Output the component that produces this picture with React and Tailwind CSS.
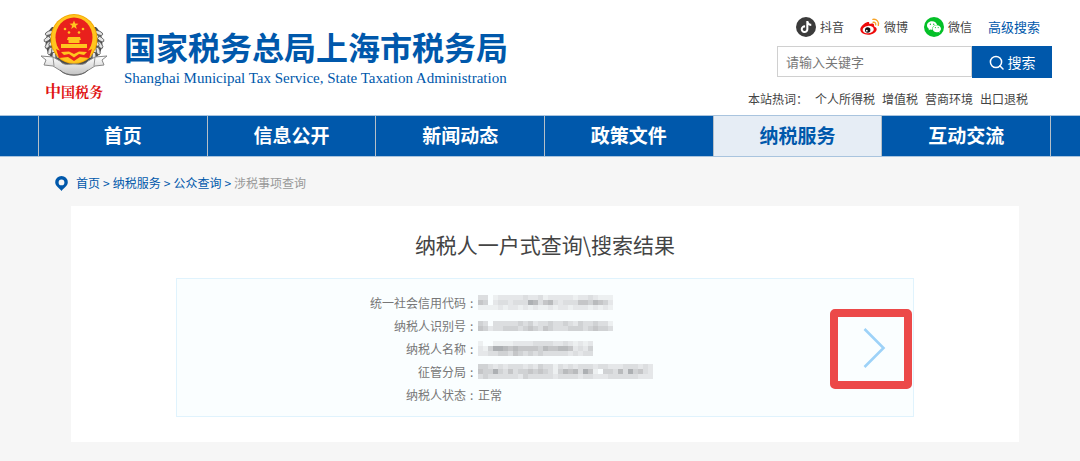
import React from 'react';
import { FaTiktok } from 'react-icons/fa6';
import { AiFillWechat } from 'react-icons/ai';

const NAV = ['首页', '信息公开', '新闻动态', '政策文件', '纳税服务', '互动交流'];
const HOT_WORDS = ['个人所得税', '增值税', '营商环境', '出口退税'];

// Each digit is the darkness of one mosaic cell, 0 is clear.
const ROWS = [
  { label: '统一社会信用代码', mosaic: ['330122222322312222212232111', '540233233376356323335546542', '111121221212112122122212121'] },
  { label: '纳税人识别号', mosaic: ['430333334342334334324334331', '542334443454354333444345443'] },
  { label: '纳税人名称', mosaic: ['10011112222333322321212', '21477656555546556652324', '22334435434343333323233'] },
  { label: '征管分局', mosaic: ['44323233323243313232333233222333232', '54474353445454314656375104436374532', '34333333243333323333233222333333222'] },
  { label: '纳税人状态', value: '正常' },
];

const SHADES = ['#fafeff', '#edf0f1', '#e5e7e9', '#dcdee0', '#d0d2d4', '#c5c6c8', '#b9bbbd', '#adb0b3'];

function Mosaic({ rows }) {
  const w = rows[0].length * 5;
  const h = rows.length * 5;
  return (
    <svg width={w} height={h} viewBox={`0 0 ${w} ${h}`} shapeRendering="crispEdges" aria-hidden="true">
      {rows.map((row, y) =>
        [...row].map((d, x) => (
          <rect key={`${x}-${y}`} x={x * 5} y={y * 5} width="5" height="5" fill={SHADES[Number(d)]} />
        ))
      )}
    </svg>
  );
}

function Emblem() {
  const side = [
    [9, 20, -70], [7.5, 26, -82], [8, 32, -100], [10, 38, -118], [14, 43, -135],
    [13, 23, -60], [12, 30, -90], [14, 36, -115], [18, 41, -130],
  ];
  return (
    <svg width="68" height="66" viewBox="0 0 68 66" aria-hidden="true">
      <defs>
        <linearGradient id="ribbon" x1="0" y1="0" x2="0" y2="1">
          <stop offset="0" stopColor="#ffffff" />
          <stop offset="1" stopColor="#c4c4c4" />
        </linearGradient>
      </defs>
      <path d="M12 14C4 22 3 36 12 45l13 9h18l13-9c9-9 8-23 0-31z" fill="#4b4b4b" />
      {[false, true].map((flip) => (
        <g key={String(flip)} transform={flip ? 'translate(68 0) scale(-1 1)' : undefined}>
          {side.map(([x, y, r], i) => (
            <ellipse key={i} cx={x} cy={y} rx="4" ry="1.9" fill="#e4e4e4" stroke="#555" strokeWidth=".8" transform={`rotate(${r + 45} ${x} ${y})`} />
          ))}
        </g>
      ))}
      <ellipse cx="34" cy="26" rx="23.5" ry="25" fill="#f5a900" />
      <ellipse cx="34" cy="26" rx="22.5" ry="24" fill="#ffc51f" />
      <ellipse cx="34" cy="24.5" rx="18.5" ry="20" fill="#e9201c" />
      <path d="M34 7.5l1.2 3.1 3.3.1-2.6 2 .9 3.2-2.8-1.8-2.8 1.8.9-3.200-2.600-2 3.300-.1z" fill="#ffc51f" />
      {[[25, 16], [29, 19.5], [39, 19.5], [43, 16]].map(([x, y]) => (
        <circle key={x} cx={x} cy={y} r="1.3" fill="#ffc51f" />
      ))}
      <path d="M28 24h12l1 3H27zM28.500 27h11v3h-11zM21 31h26v4H21z" fill="#ffc51f" />
      <path d="M16 36c5 3 8 1 12 0l6 3 6-3c4 1 7 3 12 0l-3 9-9-1-6 4-6-4-9 1z" fill="#e9201c" />
      <path d="M21 39l8-.5 5 2.500 5-2.500 8 .5-3 3-5-1-5 3.500-5-3.500-5 1z" fill="#ffc51f" />
      <path d="M1 43l12 1 7 4c4 5 9 3 14 3s10 2 14-3l7-4 12-1-5 4 2 5-9 1-8 5c-5 5-21 5-26 0l-8-5-9-1 2-5z" fill="url(#ribbon)" stroke="#888" strokeWidth="1" strokeLinejoin="round" />
      <path d="M13 44l1 9M55 44l-1 9" fill="none" stroke="#8b8b8b" strokeWidth=".9" />
      <path d="M20 57c6 7 22 7 28 0" fill="none" stroke="#666" strokeWidth="1" />
    </svg>
  );
}

function WeiboIcon() {
  return (
    <svg width="20" height="18" viewBox="0 0 20 18" aria-hidden="true">
      <path d="M7.600 4.100c1.200-.4 2 .2 1.700 1.900 2.300-.9 5.300-.8 4.800 1.700-.1.500 0 .8.600 1 1.200.5 2 1.300 2 2.500 0 2.900-3.900 5.500-8.600 5.500C3.600 16.700.3 14.600.3 11.600c0-3.100 4.300-6.700 7.300-7.500z" fill="#ee0b0b" />
      <ellipse cx="8.200" cy="11.600" rx="5.600" ry="3.700" transform="rotate(-7 8.200 11.600)" fill="#fff" />
      <circle cx="7.700" cy="12" r="2.700" fill="#111" />
      <circle cx="6.800" cy="12.700" r=".9" fill="#fff" />
      <path d="M12.900 1.400c3.700-.7 6.500 2.600 5.400 6M13.200 4.300c1.800-.3 2.900 1 2.500 2.600" fill="none" stroke="#f7a428" strokeWidth="1.400" strokeLinecap="round" />
    </svg>
  );
}

function PinIcon() {
  return (
    <svg width="13" height="15" viewBox="0 0 13 15" aria-hidden="true">
      <path fillRule="evenodd" d="M6.500 0A6.300 6.300 0 0 0 .2 6.300C.2 10 4 12 6.500 15 9 12 12.800 10 12.800 6.300A6.300 6.300 0 0 0 6.500 0zm0 3.500a2.900 2.900 0 1 1 0 5.800 2.900 2.900 0 0 1 0-5.800z" fill="#0058ab" />
    </svg>
  );
}

function SearchIcon() {
  return (
    <svg width="15" height="15" viewBox="0 0 15 15" fill="none" stroke="currentColor" strokeWidth="1.500" aria-hidden="true">
      <circle cx="7" cy="7" r="5.600" />
      <path d="M10.800 10.800L14 14" strokeLinecap="round" />
    </svg>
  );
}

export default function App() {
  return (
    <div className="min-h-screen bg-[#f6f6f6] font-['Noto_Sans_CJK_SC',sans-serif] text-xs text-[#444]">
      <header className="flex h-[115px] justify-between bg-white pl-10 pr-7">
        <a href="#" className="flex items-start gap-4 text-[#0058ab]">
          <span className="flex flex-col items-center pt-[13px]">
            <Emblem />
            <span className="font-['Noto_Serif_CJK_SC','Noto_Sans_CJK_SC',serif] text-sm leading-6 font-bold text-[#e01414]">
              <span className="text-base">中</span>国税务
            </span>
          </span>
          <span className="flex flex-col pt-[26px]">
            <span className="text-[32px] leading-10 font-bold whitespace-nowrap">国家税务总局上海市税务局</span>
            <span className="font-['Liberation_Serif',serif] text-[15px] leading-6 whitespace-nowrap">Shanghai Municipal Tax Service, State Taxation Administration</span>
          </span>
        </a>

        <div className="flex flex-col pt-4">
          <div className="flex h-[22px] items-center justify-end gap-4 pr-3">
            <a href="#" className="flex items-center gap-1">
              <span className="flex size-5 items-center justify-center rounded-full bg-[#3b3b3b] text-white"><FaTiktok size={12} /></span>
              抖音
            </a>
            <a href="#" className="flex items-center gap-1"><WeiboIcon />微博</a>
            <a href="#" className="flex items-center gap-1">
              <span className="flex size-5 items-center justify-center rounded-full bg-[#04c028] text-white"><AiFillWechat size={16} /></span>
              微信
            </a>
            <a href="#" className="text-[13px] text-[#0058ab]">高级搜索</a>
          </div>
          <form className="mt-2 flex items-start self-end" onSubmit={(e) => e.preventDefault()}>
            <input type="text" aria-label="请输入关键字" placeholder="请输入关键字" className="h-[31px] w-[195px] border border-[#d0d0d0] bg-white px-2 text-[13px] outline-none placeholder:text-[#777]" />
            <button type="submit" className="flex h-8 w-20 items-center justify-center gap-1 bg-[#0058ab] text-sm text-white">
              <SearchIcon />搜索
            </button>
          </form>
          <div className="mt-3 flex justify-end gap-[7px] pr-6 leading-[18px] whitespace-nowrap">
            <span>本站热词：</span>
            {HOT_WORDS.map((w) => <a key={w} href="#">{w}</a>)}
          </div>
        </div>
      </header>

      <nav className="border-y border-[#a9c4de] bg-[#0058ab] pl-[38px] pr-[29px]">
        <ul className="grid grid-cols-6 border-l border-[#b5bfc8]">
          {NAV.map((item) => (
            <li key={item} className="border-r border-[#b5bfc8]">
              <a
                href="#"
                aria-current={item === '纳税服务' ? 'page' : undefined}
                className={`block pb-0.5 text-center text-[19px] leading-[38px] font-bold ${item === '纳税服务' ? 'bg-[#e6edf5] text-[#0058ab]' : 'text-white'}`}
              >
                {item}
              </a>
            </li>
          ))}
        </ul>
      </nav>

      <main className="pt-[17px] pr-[61px] pb-5 pl-[71px]">
        <div className="-ml-4 flex h-[18px] items-center gap-2">
          <PinIcon />
          <ol className="flex items-center gap-[3px] text-[#0058ab]">
            <li><a href="#">首页</a></li>
            <li aria-hidden="true">&gt;</li>
            <li><a href="#">纳税服务</a></li>
            <li aria-hidden="true">&gt;</li>
            <li><a href="#">公众查询</a></li>
            <li aria-hidden="true">&gt;</li>
            <li className="text-[#999]">涉税事项查询</li>
          </ol>
        </div>

        <section className="mt-[14px] bg-white px-[105px] pt-[22px] pb-[25px]">
          <h1 className="text-center text-[21px] leading-8">纳税人一户式查询\搜索结果</h1>
          <div className="mt-[18px] flex items-center border border-[#e0f3fd] bg-[#fafeff] pt-3 pb-2.5 pr-px">
            <dl className="flex-1">
              {ROWS.map(({ label, value, mosaic }) => (
                <div key={label} className="flex h-[23px] items-center text-[#777]">
                  <dt className="flex w-[301px] justify-end gap-1"><span>{label}</span><span className="w-2">:</span></dt>
                  <dd>{mosaic ? <Mosaic rows={mosaic} /> : value}</dd>
                </div>
              ))}
            </dl>
            <button type="button" aria-label="查看详情" className="flex h-20 w-[82px] items-center justify-center rounded-[5px] border-8 border-[#ec4949]">
              <svg width="66" height="64" viewBox="0 0 66 64" fill="none" aria-hidden="true">
                <path d="M26.500 12L45.500 31L26.500 50" stroke="#9dd2f8" strokeWidth="2.600" />
              </svg>
            </button>
          </div>
        </section>
      </main>
    </div>
  );
}
